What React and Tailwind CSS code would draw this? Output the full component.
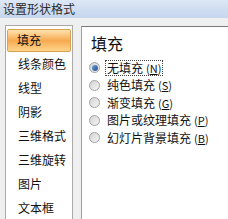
import React from 'react';

const items = ['填充', '线条颜色', '线型', '阴影', '三维格式', '三维旋转', '图片', '文本框'];

const options = [
    { label: '无填充', key: 'N', checked: true },
    { label: '纯色填充', key: 'S' },
    { label: '渐变填充', key: 'G' },
    { label: '图片或纹理填充', key: 'P' },
    { label: '幻灯片背景填充', key: 'B' },
];

const Radio = ({ checked }) => (
    <span className="relative flex items-center justify-center w-[11px] h-[11px] rounded-full border border-[#a3a3a3] bg-gradient-to-br from-[#d4d4d4] to-[#f4f4f4]">
        {checked && (
            <span className="w-[6px] h-[6px] rounded-full bg-gradient-to-br from-[#6fa3d6] to-[#1d4f8c]" />
        )}
    </span>
);

export default function App() {
    return (
        <div
            className="w-[228px] h-[219px] overflow-hidden flex flex-col bg-[#efefef] text-[#111]"
            style={{ fontFamily: '"Noto Sans CJK SC", "Noto Sans", sans-serif' }}
        >
            {/* title bar */}
            <div className="h-[20px] flex items-center px-[3px] text-[12px] text-[#2b2b2b] bg-gradient-to-b from-[#dde7f5] to-[#c6d6ee]">
                设置形状格式
            </div>

            <div className="flex flex-1 pt-[7px] pl-[5px] gap-[8px]">
                {/* category list */}
                <div className="w-[68px] bg-white border border-b-0 border-[#a9a9a9] pt-[2px] px-[1px]">
                    {items.map((it, i) => (
                        <div key={it} className="h-[24px] flex items-center">
                            {i === 0 ? (
                                <div className="w-full h-[23px] flex items-center pl-[9px] text-[12px] rounded-[2px] border border-[#d9a24a] bg-gradient-to-b from-[#fde3ad] via-[#f7a94f] to-[#fcd489]">
                                    {it}
                                </div>
                            ) : (
                                <span className="pl-[11px] text-[12px]">{it}</span>
                            )}
                        </div>
                    ))}
                </div>

                {/* settings panel */}
                <div className="flex-1 mt-[1px] bg-white border-l border-t border-l-[#a0a0a0] border-t-[#7a7a7a] pl-[7px] pt-[6px]">
                    <div className="text-[16px] leading-[20px] pl-[2px]">填充</div>
                    <div className="mt-[6px] flex flex-col">
                        {options.map((o) => (
                            <div key={o.key} className="h-[17.5px] flex items-center gap-[5px] text-[12px]">
                                <Radio checked={o.checked} />
                                <span className={`px-[1px] leading-[14px] ${o.checked ? 'border border-dotted border-[#444]' : 'border border-transparent'}`}>
                                    {o.label}
                                    <span className="text-[11px] ml-[3px]">
                                        (<span className="underline">{o.key}</span>)
                                    </span>
                                </span>
                            </div>
                        ))}
                    </div>
                </div>
            </div>
        </div>
    );
}
